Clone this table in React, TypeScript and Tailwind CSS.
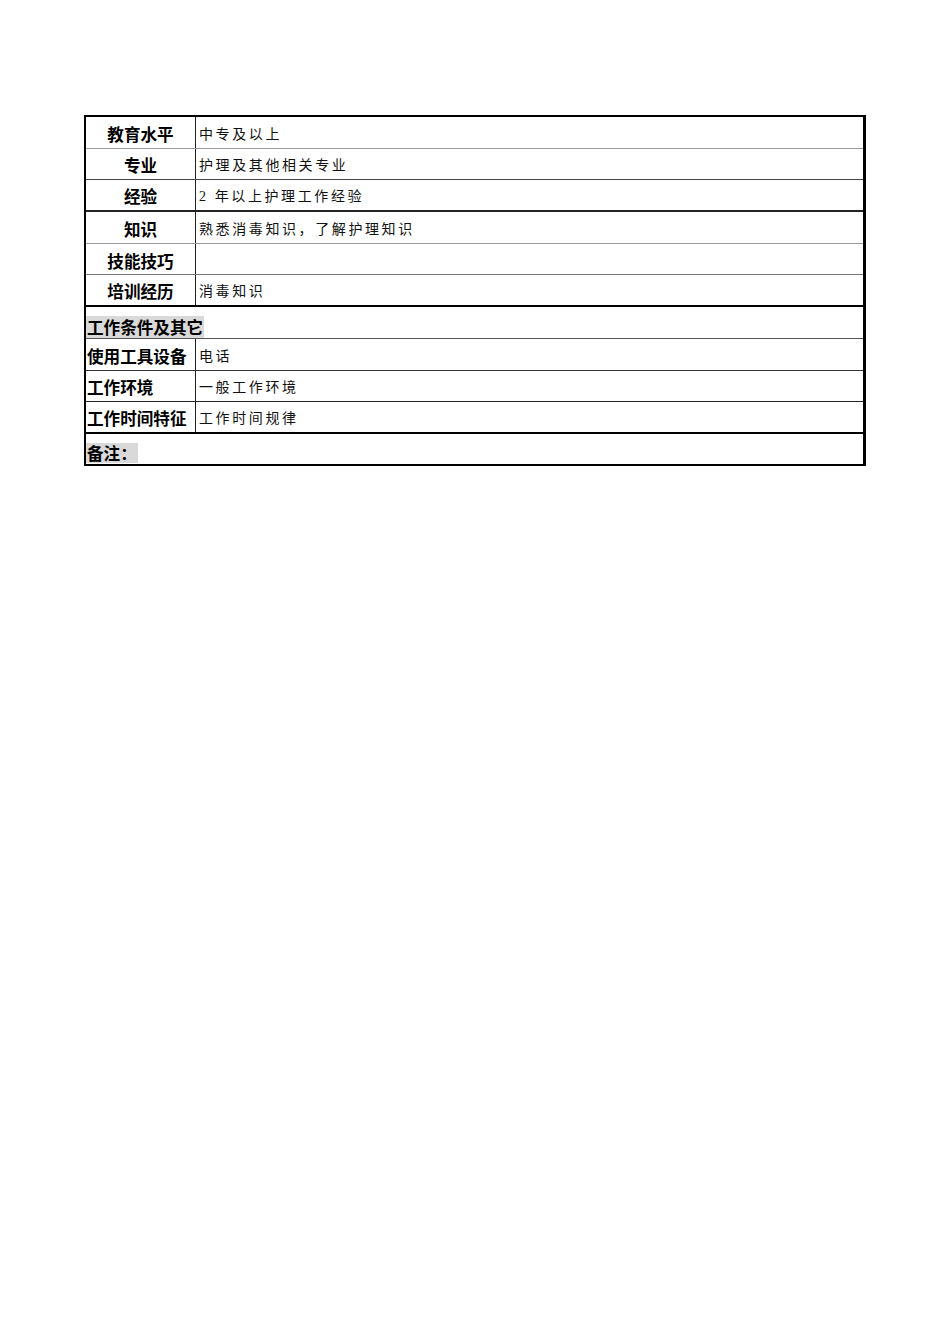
import React from "react";

const label = "font-['Noto_Sans_CJK_SC',sans-serif] font-bold text-[16.6px] text-black";
const value = "font-['Liberation_Serif','Noto_Sans_CJK_SC',serif] font-normal text-[14px] tracking-[2.6px] text-[#111]";

type Row = { name: string; text: string; line: string };

const top: Row[] = [
  { name: "教育水平", text: "中专及以上", line: "border-b border-[#9a9a9a]" },
  { name: "专业", text: "护理及其他相关专业", line: "border-b border-[#444]" },
  { name: "经验", text: "2 年以上护理工作经验", line: "border-b-2 border-[#222]" },
  { name: "知识", text: "熟悉消毒知识，了解护理知识", line: "border-b border-[#999]" },
  { name: "技能技巧", text: "", line: "border-b border-[#777]" },
  { name: "培训经历", text: "消毒知识", line: "border-b-2 border-black" },
];

const bottom: Row[] = [
  { name: "使用工具设备", text: "电话", line: "border-b border-[#333]" },
  { name: "工作环境", text: "一般工作环境", line: "border-b border-[#222]" },
  { name: "工作时间特征", text: "工作时间规律", line: "border-b-2 border-black" },
];

export default function App() {
  return (
    <div className="min-h-screen bg-white pt-[115px] pl-[84px]">
      <div className="w-[782px] border-2 border-black border-r-[3px]">
        {top.map((r) => (
          <div key={r.name} className={`flex h-[31.7px] ${r.line}`}>
            <div className="w-[110px] shrink-0 border-r border-[#222] flex items-end justify-center pb-[1px]">
              <span className={label}>{r.name}</span>
            </div>
            <div className="flex-1 flex items-end pl-[3px] pb-[3px]">
              <span className={value}>{r.text}</span>
            </div>
          </div>
        ))}
        <div className="flex h-[31.7px] items-end border-b border-[#555]">
          <span className={`${label} bg-[#d9d9d9] leading-[22px] px-[1px]`}>工作条件及其它</span>
        </div>
        {bottom.map((r) => (
          <div key={r.name} className={`flex h-[31.7px] ${r.line}`}>
            <div className="w-[110px] shrink-0 border-r border-[#222] flex items-end pl-[1px] pb-[1px]">
              <span className={label}>{r.name}</span>
            </div>
            <div className="flex-1 flex items-end pl-[3px] pb-[3px]">
              <span className={value}>{r.text}</span>
            </div>
          </div>
        ))}
        <div className="flex h-[30px] items-end pb-[1px]">
          <span className={`${label} bg-[#d9d9d9] leading-[20px] pl-[1px] pr-[1px]`}>备注：</span>
        </div>
      </div>
    </div>
  );
}
